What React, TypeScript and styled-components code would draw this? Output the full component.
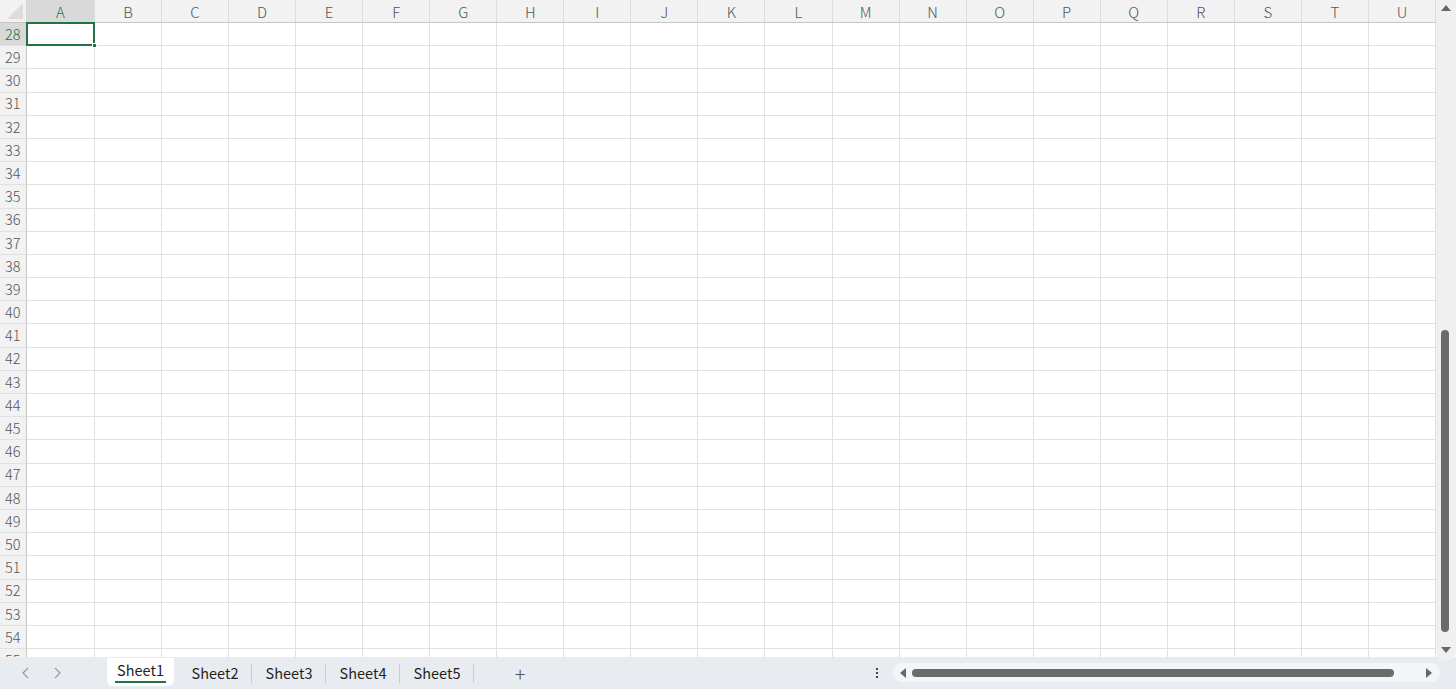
import React from "react";
import styled, { createGlobalStyle, css } from "styled-components";

const Global = createGlobalStyle`
  html, body { margin: 0; padding: 0; background: #fff; }
  body { font-family: "Noto Sans CJK JP", "Open Sans", sans-serif; }
  #root { height: 689px; }
`;

const COLS = ["A","B","C","D","E","F","G","H","I","J","K","L","M","N","O","P","Q","R","S","T","U"];
const ROWS = Array.from({ length: 28 }, (_, i) => 28 + i);

const Frame = styled.div`
  width: 1456px;
  height: 689px;
  display: flex;
  flex-direction: column;
  overflow: hidden;
  background: #e8ebef;
`;

const Main = styled.div`
  flex: 1;
  display: flex;
  min-height: 0;
  background: #fff;
`;

const Sheet = styled.div`
  width: 1436px;
  height: 657px;
  overflow: hidden;
  display: grid;
  grid-template-columns: 27px 68px repeat(20, 67.05px);
  grid-template-rows: 23px repeat(28, 23.2px);
  font-family: "Noto Sans CJK JP", "Open Sans", sans-serif;
  font-size: 14px;
  color: #444;
`;

const Corner = styled.div`
  background: #f2f2f2;
  border-right: 1px solid #d6d6d6;
  border-bottom: 1px solid #c6c6c6;
  position: relative;
  &::after {
    content: "";
    position: absolute;
    right: 3px;
    bottom: 3px;
    width: 0;
    height: 0;
    border-left: 16px solid transparent;
    border-bottom: 16px solid #dcdcdc;
  }
`;

const ColHead = styled.div<{ $active?: boolean }>`
  background: ${p => (p.$active ? "#d9d9d9" : "#f2f2f2")};
  color: ${p => (p.$active ? "#217346" : "#555")};
  border-right: 1px solid #dcdcdc;
  border-bottom: 1px solid #c6c6c6;
  display: flex;
  align-items: center;
  justify-content: center;
  font-size: 15px;
  font-weight: 300;
  line-height: 1;
  padding-top: 1px;
  box-sizing: border-box;
`;

const RowHead = styled.div<{ $active?: boolean }>`
  background: ${p => (p.$active ? "#d9d9d9" : "#f2f2f2")};
  color: ${p => (p.$active ? "#217346" : "#555")};
  border-right: 1px solid #c6c6c6;
  border-bottom: 1px solid #e1e1e1;
  display: flex;
  align-items: center;
  justify-content: flex-start;
  padding-left: 5px;
  font-size: 14.5px;
  font-weight: 300;
  line-height: 1;
  box-sizing: border-box;
`;

const Cell = styled.div<{ $selected?: boolean }>`
  border-right: 1px solid #e1e1e1;
  border-bottom: 1px solid #e1e1e1;
  box-sizing: border-box;
  position: relative;
  ${p =>
    p.$selected &&
    css`
      &::before {
        content: "";
        position: absolute;
        left: -1px;
        top: -1px;
        right: -1px;
        bottom: -1px;
        border: 2px solid #217346;
      }
      &::after {
        content: "";
        position: absolute;
        right: -3px;
        bottom: -3px;
        width: 5px;
        height: 5px;
        background: #217346;
        border: 1px solid #fff;
        box-sizing: border-box;
        z-index: 2;
      }
    `}
`;

const VScroll = styled.div`
  width: 20px;
  height: 660px;
  background: #f0f0f0;
  border-bottom-left-radius: 8px;
  border-bottom-right-radius: 8px;
  display: flex;
  flex-direction: column;
  align-items: center;
  justify-content: space-between;
  padding: 4px 0 6px;
  box-sizing: border-box;
  position: relative;
  z-index: 1;
`;

const VThumb = styled.div`
  position: absolute;
  left: 5px;
  top: 330px;
  width: 8px;
  height: 302px;
  border-radius: 4px;
  background: #6b6b6b;
`;

const Arrow = styled.svg`
  display: block;
  fill: #666;
  flex: none;
`;

const TabBar = styled.div`
  height: 32px;
  display: flex;
  align-items: stretch;
  background: #e8ebef;
  font-family: "Noto Sans CJK JP", "Open Sans", sans-serif;
`;

const Nav = styled.div`
  width: 106px;
  display: flex;
  align-items: center;
  padding-left: 19px;
  gap: 17px;
  box-sizing: border-box;
`;

const NavBtn = styled.svg`
  width: 14px;
  height: 14px;
  stroke: #9aa0a6;
  stroke-width: 1.3;
  fill: none;
`;

const Tabs = styled.div`
  display: flex;
  align-items: stretch;
`;

const Tab = styled.div<{ $active?: boolean }>`
  position: relative;
  display: flex;
  align-items: center;
  justify-content: center;
  width: ${p => (p.$active ? "67px" : "74px")};
  font-size: 14.5px;
  color: #1f1f1f;
  box-sizing: border-box;
  ${p =>
    p.$active
      ? css`
          background: #fff;
          margin: 1px 4px 3px 1px;
          border-radius: 0 0 6px 6px;
          padding-bottom: 3px;
          & > span {
            border-bottom: 2px solid #217346;
            padding: 0 2px 1px;
          }
        `
      : css`
          padding-bottom: 1px;
          &::after {
            content: "";
            position: absolute;
            right: 0;
            top: 7px;
            bottom: 6px;
            width: 1px;
            background: #c9ccd0;
          }
        `}
`;

const AddBtn = styled.div`
  width: 92px;
  display: flex;
  align-items: center;
  justify-content: center;
  font-size: 20px;
  color: #555;
  font-weight: 300;
`;

const Spacer = styled.div`
  flex: 1;
`;

const More = styled.div`
  width: 16px;
  margin-right: 8px;
  display: flex;
  flex-direction: column;
  align-items: center;
  justify-content: center;
  gap: 2px;
  & > i {
    width: 2px;
    height: 2px;
    background: #444;
    display: block;
  }
`;

const HScroll = styled.div`
  width: 547px;
  height: 19px;
  margin: 6px 16px 0 0;
  background: #f4f5f6;
  border-radius: 9px;
  display: flex;
  align-items: center;
  padding: 0 7px 0 4px;
  box-sizing: border-box;
  gap: 2px;
`;

const HThumb = styled.div`
  width: 482px;
  height: 8px;
  border-radius: 4px;
  background: #6b6b6b;
  margin-left: 3px;
`;

export default function App() {
  return (
    <>
      <Global />
      <Frame>
        <Main>
          <Sheet>
            <Corner />
            {COLS.map((c, i) => (
              <ColHead key={c} $active={i === 0}>{c}</ColHead>
            ))}
            {ROWS.map(r => (
              <React.Fragment key={r}>
                <RowHead $active={r === 28}>{r}</RowHead>
                {COLS.map((c, i) => (
                  <Cell key={c} $selected={r === 28 && i === 0} />
                ))}
              </React.Fragment>
            ))}
          </Sheet>
          <VScroll>
            <Arrow width="10" height="8" viewBox="0 0 10 8"><path d="M0 7 L5 1 L10 7 Z" /></Arrow>
            <VThumb />
            <Arrow width="10" height="8" viewBox="0 0 10 8"><path d="M0 1 L5 7 L10 1 Z" /></Arrow>
          </VScroll>
        </Main>
        <TabBar>
          <Nav>
            <NavBtn viewBox="0 0 14 14"><path d="M9 2 L4 7 L9 12" /></NavBtn>
            <NavBtn viewBox="0 0 14 14"><path d="M5 2 L10 7 L5 12" /></NavBtn>
          </Nav>
          <Tabs>
            <Tab $active><span>Sheet1</span></Tab>
            <Tab>Sheet2</Tab>
            <Tab>Sheet3</Tab>
            <Tab>Sheet4</Tab>
            <Tab>Sheet5</Tab>
          </Tabs>
          <AddBtn>+</AddBtn>
          <Spacer />
          <More><i /><i /><i /></More>
          <HScroll>
            <Arrow width="8" height="10" viewBox="0 0 8 10" style={{ marginLeft: 2 }}><path d="M7 0 L1 5 L7 10 Z" /></Arrow>
            <HThumb />
            <Spacer />
            <Arrow width="8" height="10" viewBox="0 0 8 10"><path d="M1 0 L7 5 L1 10 Z" /></Arrow>
          </HScroll>
        </TabBar>
      </Frame>
    </>
  );
}
